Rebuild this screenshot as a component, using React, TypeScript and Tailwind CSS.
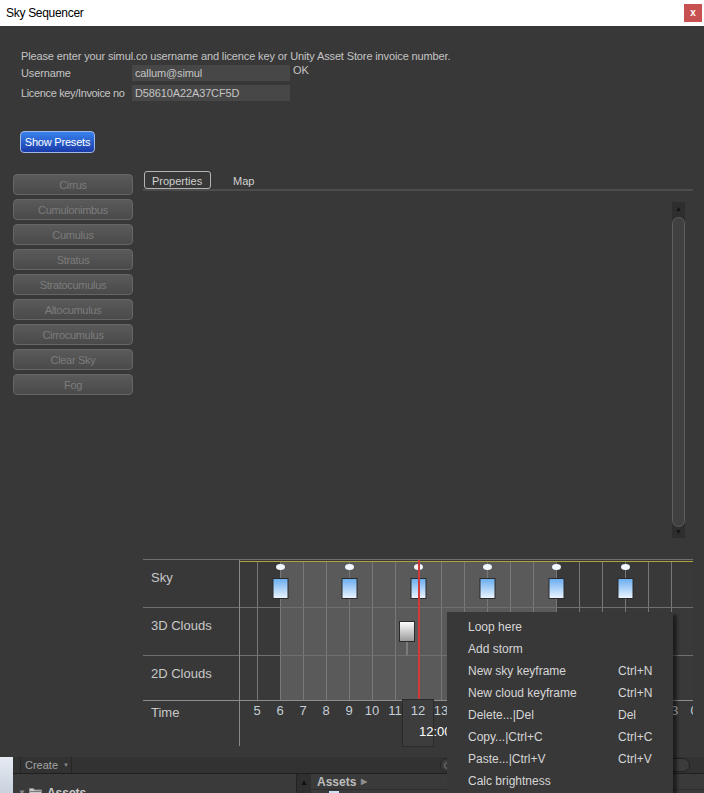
import React from 'react';

const presets = ['Cirrus', 'Cumulonimbus', 'Cumulus', 'Stratus', 'Stratocumulus', 'Altocumulus', 'Cirrocumulus', 'Clear Sky', 'Fog'];

// hour h sits at x = 17 + (h - 5) * 23 inside the timeline canvas
const hourX = (h: number) => 17 + (h - 5) * 23;
const hours = Array.from({ length: 20 }, (_, i) => i + 5);
const skyKeys = [6, 9, 12, 15, 18, 21];

const menuItems: [string, string][] = [
  ['Loop here', ''],
  ['Add storm', ''],
  ['New sky keyframe', 'Ctrl+N'],
  ['New cloud keyframe', 'Ctrl+N'],
  ['Delete...|Del', 'Del'],
  ['Copy...|Ctrl+C', 'Ctrl+C'],
  ['Paste...|Ctrl+V', 'Ctrl+V'],
  ['Calc brightness', ''],
];

function TimelineCanvas() {
  return (
    <svg width={453} height={141} className="block">
      <defs>
        <linearGradient id="skyKey" x1="0" y1="0" x2="0" y2="1">
          <stop offset="0" stopColor="#68acf0" />
          <stop offset="1" stopColor="#eef6ff" />
        </linearGradient>
        <linearGradient id="cloudKey" x1="0" y1="0" x2="0" y2="1">
          <stop offset="0" stopColor="#ffffff" />
          <stop offset="1" stopColor="#999999" />
        </linearGradient>
      </defs>
      <rect x={0} y={0} width={453} height={141} fill="#393939" />
      {/* daylight band 6h - 18h */}
      <rect x={40} y={2} width={276} height={138} fill="#5a5a5a" />
      <line x1={0} y1={1.5} x2={453} y2={1.5} stroke="#ada33a" />
      {hours.slice(0, 19).map((h) => (
        <line key={h} x1={hourX(h) + 0.5} y1={2} x2={hourX(h) + 0.5} y2={140} stroke="#787878" />
      ))}
      <line x1={0} y1={47.5} x2={453} y2={47.5} stroke="#707070" />
      <line x1={0} y1={95.5} x2={453} y2={95.5} stroke="#707070" />
      <line x1={0} y1={140.5} x2={453} y2={140.5} stroke="#8e8e8e" />
      {skyKeys.map((h) => (
        <g key={h}>
          <ellipse cx={hourX(h) + 0.5} cy={7} rx={4.5} ry={3} fill="#f2f8ff" />
          <rect x={hourX(h) - 7} y={18.5} width={15} height={20} fill="url(#skyKey)" stroke="#2a2a2a" />
        </g>
      ))}
      <line x1={167} y1={82} x2={167} y2={95} stroke="#9c9c9c" />
      <rect x={159.5} y={61.5} width={15} height={20} fill="url(#cloudKey)" stroke="#2a2a2a" />
      <line x1={179} y1={0} x2={179} y2={140} stroke="#d23a3a" strokeWidth={2} />
    </svg>
  );
}

export default function App() {
  return (
    <div
      className="relative w-[704px] h-[793px] overflow-hidden bg-[#383838]"
      style={{ fontFamily: '"Liberation Sans", Arial, sans-serif' }}
    >
      {/* Title bar */}
      <div className="h-[26px] bg-white flex items-center justify-between">
        <span className="pl-[6px] text-[12px] tracking-[-0.3px] text-black">Sky Sequencer</span>
        <div className="mr-[2px] w-[18px] h-[18px] bg-[#c75050] flex items-center justify-center text-white text-[10px] font-bold leading-none">
          x
        </div>
      </div>

      {/* Window body */}
      <div className="h-[731px] bg-[#383838] flex flex-col">
        <div className="px-[21px] pt-[22px] text-[11px] leading-[16px] tracking-[-0.13px] text-[#c4c4c4] whitespace-nowrap">
          <p>Please enter your simul.co username and licence key or Unity Asset Store invoice number.</p>
          <div className="mt-[1px] flex h-[16px] items-center">
            <span className="w-[111px] shrink-0">Username</span>
            <div className="w-[158px] h-[16px] bg-[#474747] pl-[3px]">callum@simul</div>
            <span className="ml-[3px] self-start -mt-[3px]">OK</span>
          </div>
          <div className="mt-[4px] flex h-[16px] items-center">
            <span className="w-[111px] shrink-0 tracking-[-0.35px]">Licence key/Invoice no</span>
            <div className="w-[158px] h-[16px] bg-[#474747] pl-[3px]">D58610A22A37CF5D</div>
          </div>
        </div>

        <div className="ml-[20px] mt-[30px] w-[75px] h-[22px] rounded-[4px] border border-[#9fb6e6] bg-gradient-to-b from-[#3b83ee] to-[#1a3aa8] flex items-center justify-center text-[11px] tracking-[-0.2px] text-white">
          Show Presets
        </div>

        <div className="mt-[18px] flex">
          {/* Presets column */}
          <div className="ml-[13px] mt-[3px] w-[120px] flex flex-col gap-[4px]">
            {presets.map((p) => (
              <div
                key={p}
                className="h-[21px] rounded-[4px] border border-[#666666] bg-gradient-to-b from-[#5a5a5a] to-[#4a4a4a] flex items-center justify-center pt-[1px] text-[11px] tracking-[-0.3px] text-[#7c7c7c]"
              >
                {p}
              </div>
            ))}
          </div>

          {/* Right panel */}
          <div className="ml-[10px] w-[550px] flex flex-col">
            <div className="h-[18px] flex items-center text-[11px] text-[#d0d0d0]">
              <div className="ml-[1px] w-[67px] h-[18px] border border-[#b4b4b4] rounded-[3px] pl-[7px] pt-[2px] flex items-center">
                Properties
              </div>
              <span className="ml-[22px] pt-[2px]">Map</span>
            </div>
            <div className="h-[2px] bg-[#4c4c4c]" />

            <div className="h-[368px] flex justify-end pt-[11px] pb-[21px] pr-[8px]">
              <div className="w-[13px] flex flex-col bg-[#2e2e2e]">
                <div className="h-[15px] flex items-center justify-center text-[7px] text-[#111111]">▲</div>
                <div className="flex-1 rounded-full border border-[#5e5e5e] bg-[#404040]" />
                <div className="h-[11px] flex items-center justify-center text-[7px] text-[#111111]">▼</div>
              </div>
            </div>

            {/* Timeline */}
            <div className="border-t border-[#6f6f6f] flex">
              <div className="w-[97px] border-r border-[#8a8a8a] flex flex-col text-[13px] leading-[16px] text-[#c8c8c8]">
                <div className="h-[48px] border-b border-[#707070] pl-[8px] pt-[10px]">Sky</div>
                <div className="h-[48px] border-b border-[#707070] pl-[8px] pt-[10px]">3D Clouds</div>
                <div className="h-[45px] border-b border-[#8e8e8e] pl-[8px] pt-[10px]">2D Clouds</div>
                <div className="h-[45px] pl-[8px] pt-[4px]">Time</div>
              </div>
              <div className="relative w-[453px] flex flex-col">
                <TimelineCanvas />
                <div className="absolute left-[162px] top-[139px] w-[32px] h-[48px] bg-[#3d3d3d] border border-[#2b2b2b]">
                  <span className="absolute left-[16px] top-[24px] text-[13px] leading-[16px] text-white whitespace-nowrap">12:00</span>
                </div>
                <div className="relative h-[45px] overflow-hidden flex pl-[5.5px] pt-[2px] text-[13px] leading-[16px] text-[#c6ced6]">
                  {hours.map((h) => (
                    <span key={h} className="w-[23px] shrink-0 text-center">
                      {h % 24}
                    </span>
                  ))}
                </div>
              </div>
            </div>
          </div>
        </div>
      </div>

      {/* Unity editor behind the window */}
      <div className="h-[36px] flex">
        <div className="w-[13px] bg-gradient-to-b from-[#e6ebf2] to-[#c8d1dd]" />
        <div className="flex-1 flex flex-col">
          <div className="h-[17px] bg-[#323232] border-b border-[#1f1f1f] flex items-stretch">
            <div className="ml-[7px] w-[52px] border-l border-r border-[#262626] pl-[4px] flex items-center text-[11px] text-[#a4a4a4]">
              Create
              <span className="ml-[5px] text-[6px] text-[#8a8a8a]">▼</span>
            </div>
            <div className="ml-[368px] my-[1px] w-[250px] rounded-full border border-[#222222] bg-[#3c3c3c] flex items-center pl-[3px]">
              <span className="w-[7px] h-[7px] rounded-full border border-[#777777]" />
            </div>
          </div>
          <div className="flex-1 flex">
            <div className="w-[283px] bg-[#3a3a3a] flex items-start pt-[11px] pl-[5px] gap-[3px]">
              <span className="text-[8px] text-[#8a8a8a] mt-[2px]">▼</span>
              <svg width={13} height={11} viewBox="0 0 13 11" className="mt-[2px]">
                <path d="M0.5 1.5h4l1 1.5h7v7.5h-12z" fill="#c9c9c9" stroke="#8a8a8a" />
                <path d="M1 4.5h11" stroke="#7a7a7a" />
              </svg>
              <span className="ml-[2px] text-[12px] font-bold leading-[16px] text-[#cccccc]">Assets</span>
            </div>
            <div className="w-[1px] bg-[#232323]" />
            <div className="w-[14px] bg-[#2f2f2f] flex justify-center pt-[3px] text-[8px] text-[#0f0f0f]">▲</div>
            <div className="flex-1 flex flex-col bg-[#3a3a3a]">
              <div className="h-[15px] flex items-center pl-[6px] text-[12px] font-bold text-[#bdbdbd]">
                Assets
                <span className="ml-[5px] text-[8px] text-[#8c8c8c]">▶</span>
              </div>
              <div className="flex-1 border-t border-[#2e2e2e] pl-[18px]">
                <div className="mt-[1px] w-[10px] h-[3px] bg-[#cfe0f5]" />
              </div>
            </div>
          </div>
        </div>
      </div>

      {/* Context menu */}
      <div className="absolute left-[447px] top-[612px] w-[226px] h-[190px] bg-[#383838] shadow-[4px_3px_3px_rgba(0,0,0,0.5)] pt-[4px] text-[12px] text-[#d6d6d6]">
        {menuItems.map(([label, key]) => (
          <div key={label} className="h-[22px] flex items-center pl-[21px]">
            <span className="w-[150px]">{label}</span>
            <span>{key}</span>
          </div>
        ))}
      </div>
    </div>
  );
}
